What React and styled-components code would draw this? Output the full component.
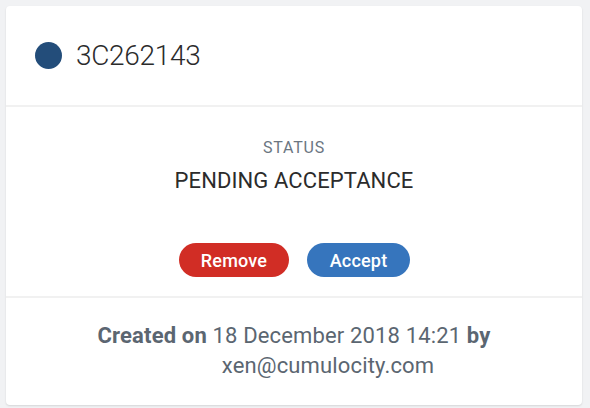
import React from "react";
import styled, { createGlobalStyle } from "styled-components";

const Global = createGlobalStyle`
  html, body { margin: 0; padding: 0; background: #f1f2f4; }
  body { font-family: Roboto, "Liberation Sans", sans-serif; }
`;

const Page = styled.div`
  padding: 6px 8px 3px 6px;
  width: 590px;
  height: 408px;
  box-sizing: border-box;
`;

const Card = styled.div`
  background: #fff;
  border-radius: 4px;
  box-shadow: 0 1px 2px rgba(0, 0, 0, 0.12);
  height: 399px;
  display: flex;
  flex-direction: column;
`;

const Header = styled.div`
  display: flex;
  align-items: center;
  gap: 14px;
  padding-left: 29px;
  border-bottom: 2px solid #f1f1f1;
  box-sizing: border-box;
  height: 101px;
`;

const Dot = styled.span`
  width: 27px;
  height: 27px;
  border-radius: 50%;
  background: #234d7a;
  flex: none;
`;

const Title = styled.span`
  font-size: 28px;
  font-weight: 300;
  color: #2b2b2b;
  letter-spacing: -0.3px;
`;

const Body = styled.div`
  height: 191px;
  box-sizing: border-box;
  border-bottom: 2px solid #f1f1f1;
  display: flex;
  flex-direction: column;
  align-items: center;
  padding-top: 31px;
`;

const Label = styled.div`
  font-size: 16px;
  color: #6b7682;
  letter-spacing: 0.8px;
  line-height: 20px;
`;

const Status = styled.div`
  font-size: 22px;
  color: #2b2b2b;
  line-height: 26px;
  margin-top: 10px;
  letter-spacing: 0.1px;
`;

const Actions = styled.div`
  display: flex;
  gap: 18px;
  margin-top: 49px;
  margin-left: 1px;
`;

const Button = styled.button`
  border: none;
  border-radius: 17px;
  height: 34px;
  width: ${(p) => p.$w}px;
  background: ${(p) => (p.$variant === "danger" ? "#d12d25" : "#3675bd")};
  color: #fff;
  font-family: Roboto, "Liberation Sans", sans-serif;
  font-size: 18px;
  font-weight: 500;
  letter-spacing: 0.2px;
  padding: 0;
  cursor: pointer;
`;

const Footer = styled.div`
  flex: 1;
  display: flex;
  justify-content: center;
  padding-top: 23px;
  box-sizing: border-box;
`;

const Meta = styled.p`
  margin: 0;
  width: 450px;
  text-align: center;
  font-size: 22px;
  line-height: 30px;
  letter-spacing: 0.15px;
  color: #5b6671;
`;

const Strong = styled.b`
  font-weight: 700;
`;

const Email = styled.span`
  display: inline-block;
  padding-left: 68px;
`;

export default function App() {
  return (
    <>
      <Global />
      <Page>
        <Card>
          <Header>
            <Dot />
            <Title>3C262143</Title>
          </Header>
          <Body>
            <Label>STATUS</Label>
            <Status>PENDING ACCEPTANCE</Status>
            <Actions>
              <Button $variant="danger" $w={110}>Remove</Button>
              <Button $variant="primary" $w={103}>Accept</Button>
            </Actions>
          </Body>
          <Footer>
            <Meta>
              <Strong>Created on</Strong> 18 December 2018 14:21 <Strong>by</Strong>{" "}
              <Email>xen@cumulocity.com</Email>
            </Meta>
          </Footer>
        </Card>
      </Page>
    </>
  );
}
